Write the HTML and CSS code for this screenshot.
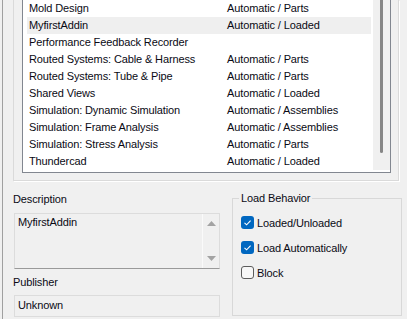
FILE: index.html
```html
<!DOCTYPE html>
<html>
<head>
<meta charset="utf-8">
<link rel="stylesheet" href="styles.css">
</head>
<body>
<div class="window">
  <div class="frame">
    <div class="list">
      <div class="rows">
        <div class="row"><span class="c1">Mold Design</span><span>Automatic / Parts</span></div>
        <div class="row sel"><span class="c1">MyfirstAddin</span><span>Automatic / Loaded</span></div>
        <div class="row"><span class="c1">Performance Feedback Recorder</span><span></span></div>
        <div class="row"><span class="c1">Routed Systems: Cable &amp; Harness</span><span>Automatic / Parts</span></div>
        <div class="row"><span class="c1">Routed Systems: Tube &amp; Pipe</span><span>Automatic / Parts</span></div>
        <div class="row"><span class="c1">Shared Views</span><span>Automatic / Loaded</span></div>
        <div class="row"><span class="c1">Simulation: Dynamic Simulation</span><span>Automatic / Assemblies</span></div>
        <div class="row"><span class="c1">Simulation: Frame Analysis</span><span>Automatic / Assemblies</span></div>
        <div class="row"><span class="c1">Simulation: Stress Analysis</span><span>Automatic / Parts</span></div>
        <div class="row"><span class="c1">Thundercad</span><span>Automatic / Loaded</span></div>
      </div>
      <div class="vscroll"><div class="thumb"></div></div>
    </div>
  </div>
  <div class="bottom">
    <div class="info">
      <div class="label desc-label">Description</div>
      <div class="descbox">
        <div class="desctext">MyfirstAddin</div>
        <div class="descscroll">
          <svg width="9" height="6" viewBox="0 0 9 6"><polygon points="4.5,0 9,5 0,5" fill="#a3a3a3"/></svg>
          <svg width="9" height="6" viewBox="0 0 9 6"><polygon points="0,0 9,0 4.5,5" fill="#a3a3a3"/></svg>
        </div>
      </div>
      <div class="label pub-label">Publisher</div>
      <div class="pubbox">Unknown</div>
    </div>
    <fieldset class="group">
      <legend>Load Behavior</legend>
      <div class="check">
        <span class="cb on"><svg width="13" height="13" viewBox="0 0 13 13"><path d="M3.5 6.8 L5.6 8.8 L9.6 4.6" fill="none" stroke="#fff" stroke-width="1.1"/></svg></span>
        <span>Loaded/Unloaded</span>
      </div>
      <div class="check">
        <span class="cb on"><svg width="13" height="13" viewBox="0 0 13 13"><path d="M3.5 6.8 L5.6 8.8 L9.6 4.6" fill="none" stroke="#fff" stroke-width="1.1"/></svg></span>
        <span>Load Automatically</span>
      </div>
      <div class="check">
        <span class="cb off"></span>
        <span>Block</span>
      </div>
    </fieldset>
  </div>
</div>
</body>
</html>
```

FILE: styles.css
```css
html, body {
  margin: 0;
  padding: 0;
  background: #f0f0f0;
}
body {
  font-family: "Liberation Sans", Arial, sans-serif;
  font-size: 11px;
  letter-spacing: -0.12px;
  color: #0a0a14;
  width: 407px;
  height: 319px;
  overflow: hidden;
}
.window {
  margin-left: 2px;
  border-left: 1px solid #a0a0a0;
  height: 319px;
}
.frame {
  box-sizing: border-box;
  width: 386px;
  margin-left: 10px;
  padding: 0 7px 7px 8px;
  border: 1px solid #dadada;
  border-top: none;
  box-shadow: 1px 1px 0 #ffffff;
}
.list {
  box-sizing: border-box;
  width: 369px;
  display: flex;
  background: #ffffff;
  border: 1px solid #828790;
  border-top: none;
  padding-bottom: 2px;
}
.rows {
  padding-left: 4px;
  width: 344px;
}
.row {
  display: flex;
  height: 17px;
  line-height: 17px;
  padding-left: 2px;
  white-space: nowrap;
}
.row.sel {
  background: #efefef;
}
.c1 {
  width: 198px;
  flex: none;
}
.vscroll {
  margin-left: 2px;
  width: 17px;
  background: #f0f0f0;
}
.thumb {
  margin-left: 7px;
  width: 3px;
  height: 153px;
  background: #868686;
  border-radius: 0 0 2px 2px;
}
.bottom {
  display: flex;
  margin-left: 10px;
  margin-top: 1px;
}
.info {
  width: 207px;
}
.label {
  line-height: 14px;
  height: 14px;
}
.desc-label {
  margin-top: 10px;
}
.descbox {
  box-sizing: border-box;
  margin-top: 7px;
  margin-left: 1px;
  width: 206px;
  height: 56px;
  border: 1px solid #dcdcdc;
  border-bottom-color: #9a9a9a;
  display: flex;
}
.desctext {
  flex: 1;
  padding: 1px 0 0 3px;
  line-height: 14px;
}
.descscroll {
  width: 16px;
  border-left: 1px solid #fafafa;
  display: flex;
  flex-direction: column;
  justify-content: space-between;
  align-items: center;
  padding: 7px 0 6px;
}
.descscroll svg {
  display: block;
}
.pub-label {
  margin-top: 6px;
}
.pubbox {
  box-sizing: border-box;
  margin-top: 6px;
  margin-left: 1px;
  width: 206px;
  height: 22px;
  border: 1px solid #dcdcdc;
  line-height: 19px;
  padding-left: 3px;
}
.group {
  box-sizing: border-box;
  margin: 9px 0 0 12px;
  width: 170px;
  height: 125px;
  padding: 0 0 0 6px;
  border: 1px solid #d8d8d8;
  min-width: 0;
}
.group legend {
  padding: 0 2px;
  line-height: 14px;
}
.check {
  display: flex;
  align-items: center;
  height: 25px;
  margin-left: 2px;
}
.check:first-of-type {
  margin-top: 5px;
}
.cb {
  box-sizing: border-box;
  width: 13px;
  height: 13px;
  border-radius: 3px;
  margin-right: 3px;
  flex: none;
}
.cb svg {
  display: block;
}
.cb.on {
  background: #0067c0;
}
.cb.off {
  border: 1px solid #5c5c5c;
  background: #f7f7f7;
}
```
